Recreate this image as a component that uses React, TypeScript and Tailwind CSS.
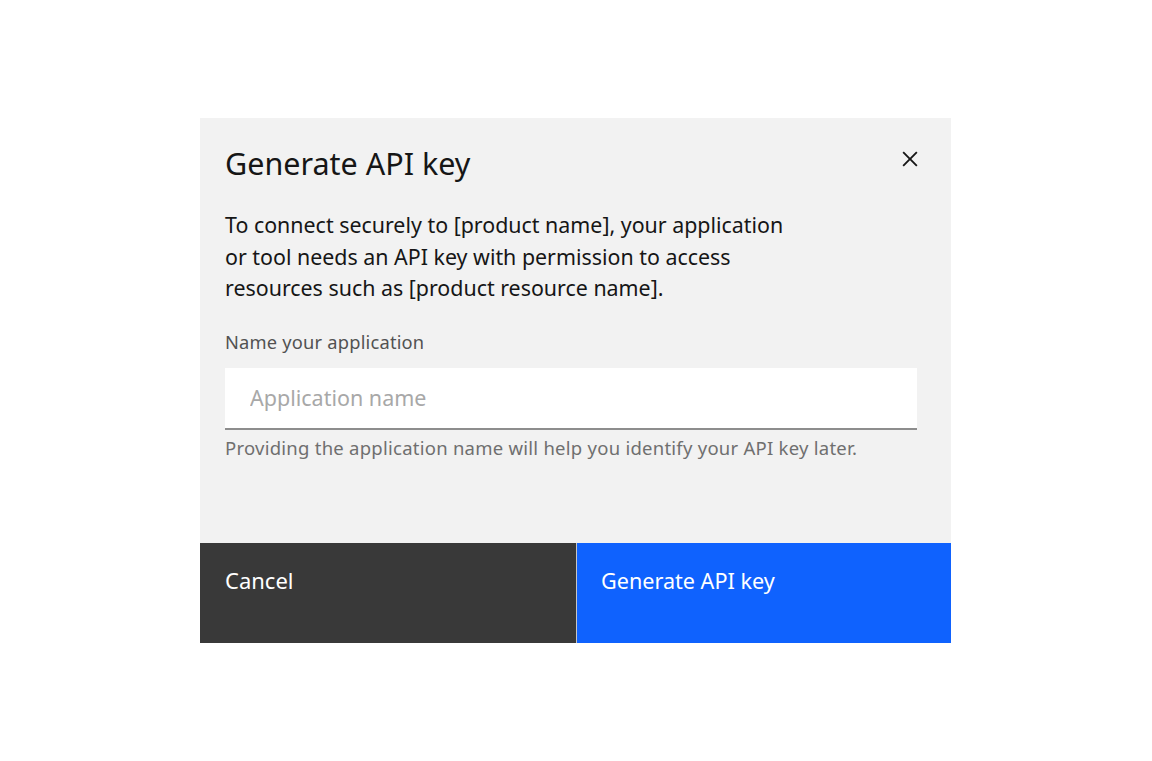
import React from "react";

function CloseIcon() {
  return (
    <svg width="30" height="30" viewBox="0 0 32 32" fill="#161616" aria-hidden="true">
      <path d="M24 9.4L22.6 8 16 14.6 9.4 8 8 9.4 14.6 16 8 22.6 9.4 24 16 17.4 22.6 24 24 22.6 17.4 16 24 9.4z" />
    </svg>
  );
}

export default function App() {
  return (
    <div
      className="min-h-screen bg-white flex items-center justify-center pr-px"
      style={{ fontFamily: '"Noto Sans", "Open Sans", sans-serif' }}
    >
      <div className="w-[751px] bg-[#f2f2f2] flex flex-col">
        <div className="h-[425px] flex flex-col pl-[25px] pr-[26px] pt-[25px]">
          <div className="flex items-start justify-between">
            <h2 className="text-[30.5px] leading-[40px] text-[#161616] font-normal">
              Generate API key
            </h2>
            <button className="w-[30px] h-[30px] flex items-center justify-center mt-px">
              <CloseIcon />
            </button>
          </div>

          <p className="mt-[26px] text-[21.4px] leading-[31.5px] text-[#161616]">
            To connect securely to [product name], your application
            <br />
            or tool needs an API key with permission to access
            <br />
            resources such as [product resource name].
          </p>

          <label className="mt-[26px] text-[18.3px] leading-[24px] text-[#525252] tracking-[0.2px]">
            Name your application
          </label>
          <input
            className="mt-[14px] w-[692px] h-[62px] bg-white border-b-2 border-[#8d8d8d] px-[25px] text-[21.5px] text-[#161616] placeholder-[#a8a8a8] outline-none"
            placeholder="Application name"
          />
          <div className="mt-[6px] text-[18.5px] leading-[24px] text-[#6f6f6f] tracking-[0.25px]">
            Providing the application name will help you identify your API key later.
          </div>
        </div>

        <div className="h-[100px] flex">
          <button className="w-[376px] h-full bg-[#393939] text-white text-[22px] leading-[28px] text-left pl-[25px] pt-[23px] flex items-start">
            Cancel
          </button>
          <div className="w-px bg-[#c6c6c6]" />
          <button className="flex-1 h-full bg-[#0f62fe] text-white text-[21.6px] leading-[28px] text-left pl-[24px] pt-[24px] flex items-start">
            Generate API key
          </button>
        </div>
      </div>
    </div>
  );
}
